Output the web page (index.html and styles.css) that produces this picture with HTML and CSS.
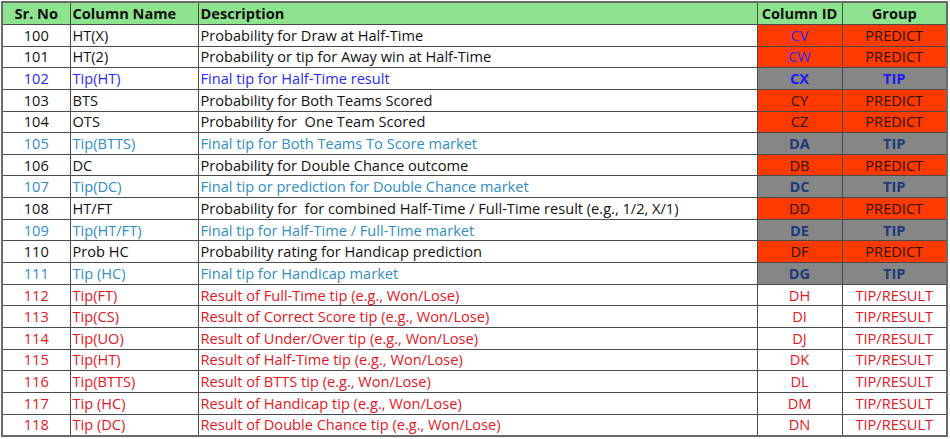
FILE: index.html
```html
<!DOCTYPE html>
<html>
<head>
<meta charset="utf-8">
<link rel="stylesheet" href="styles.css">
</head>
<body>
<table class="sheet">
<colgroup>
<col class="c-sr"><col class="c-name"><col class="c-desc"><col class="c-id"><col class="c-group">
</colgroup>
<thead>
<tr><th class="ctr">Sr. No</th><th>Column Name</th><th>Description</th><th class="ctr">Column ID</th><th class="ctr">Group</th></tr>
</thead>
<tbody>
<tr class="black"><td class="ctr">100</td><td>HT(X)</td><td>Probability for Draw at Half-Time</td><td class="ctr pred blue">CV</td><td class="ctr pred">PREDICT</td></tr>
<tr class="black"><td class="ctr">101</td><td>HT(2)</td><td>Probability or tip for Away win at Half-Time</td><td class="ctr pred blue">CW</td><td class="ctr pred">PREDICT</td></tr>
<tr class="blue"><td class="ctr">102</td><td>Tip(HT)</td><td>Final tip for Half-Time result</td><td class="ctr tip tip-blue">CX</td><td class="ctr tip tip-blue">TIP</td></tr>
<tr class="black"><td class="ctr">103</td><td>BTS</td><td>Probability for Both Teams Scored</td><td class="ctr pred">CY</td><td class="ctr pred">PREDICT</td></tr>
<tr class="black"><td class="ctr">104</td><td>OTS</td><td>Probability for&nbsp; One Team Scored</td><td class="ctr pred">CZ</td><td class="ctr pred">PREDICT</td></tr>
<tr class="teal"><td class="ctr">105</td><td>Tip(BTTS)</td><td>Final tip for Both Teams To Score market</td><td class="ctr tip">DA</td><td class="ctr tip">TIP</td></tr>
<tr class="black"><td class="ctr">106</td><td>DC</td><td>Probability for Double Chance outcome</td><td class="ctr pred">DB</td><td class="ctr pred">PREDICT</td></tr>
<tr class="teal"><td class="ctr">107</td><td>Tip(DC)</td><td>Final tip or prediction for Double Chance market</td><td class="ctr tip">DC</td><td class="ctr tip">TIP</td></tr>
<tr class="black"><td class="ctr">108</td><td>HT/FT</td><td>Probability for&nbsp; for combined Half-Time / Full-Time result (e.g., 1/2, X/1)</td><td class="ctr pred">DD</td><td class="ctr pred">PREDICT</td></tr>
<tr class="teal"><td class="ctr">109</td><td>Tip(HT/FT)</td><td>Final tip for Half-Time / Full-Time market</td><td class="ctr tip">DE</td><td class="ctr tip">TIP</td></tr>
<tr class="black"><td class="ctr">110</td><td>Prob HC</td><td>Probability rating for Handicap prediction</td><td class="ctr pred">DF</td><td class="ctr pred">PREDICT</td></tr>
<tr class="teal"><td class="ctr">111</td><td>Tip (HC)</td><td>Final tip for Handicap market</td><td class="ctr tip">DG</td><td class="ctr tip">TIP</td></tr>
<tr class="red"><td class="ctr">112</td><td>Tip(FT)</td><td>Result of Full-Time tip (e.g., Won/Lose)</td><td class="ctr">DH</td><td class="ctr">TIP/RESULT</td></tr>
<tr class="red"><td class="ctr">113</td><td>Tip(CS)</td><td>Result of Correct Score tip (e.g., Won/Lose)</td><td class="ctr">DI</td><td class="ctr">TIP/RESULT</td></tr>
<tr class="red"><td class="ctr">114</td><td>Tip(UO)</td><td>Result of Under/Over tip (e.g., Won/Lose)</td><td class="ctr">DJ</td><td class="ctr">TIP/RESULT</td></tr>
<tr class="red"><td class="ctr">115</td><td>Tip(HT)</td><td>Result of Half-Time tip (e.g., Won/Lose)</td><td class="ctr">DK</td><td class="ctr">TIP/RESULT</td></tr>
<tr class="red"><td class="ctr">116</td><td>Tip(BTTS)</td><td>Result of BTTS tip (e.g., Won/Lose)</td><td class="ctr">DL</td><td class="ctr">TIP/RESULT</td></tr>
<tr class="red"><td class="ctr">117</td><td>Tip (HC)</td><td>Result of Handicap tip (e.g., Won/Lose)</td><td class="ctr">DM</td><td class="ctr">TIP/RESULT</td></tr>
<tr class="red"><td class="ctr">118</td><td>Tip (DC)</td><td>Result of Double Chance tip (e.g., Won/Lose)</td><td class="ctr">DN</td><td class="ctr">TIP/RESULT</td></tr>
</tbody>
</table>
</body>
</html>
```

FILE: styles.css
```css
html, body {
  margin: 0;
  padding: 0;
  background: #ffffff;
}

body {
  padding: 1px 0 0 1px;
  font-family: "Open Sans", "Liberation Sans", Arial, sans-serif;
  font-size: 14.6px;
}

.sheet {
  border-collapse: collapse;
  table-layout: fixed;
  width: 945px;
  border: 2px solid #6a6a6a;
}

.c-sr { width: 68px; }
.c-name { width: 128px; }
.c-desc { width: 559px; }
.c-id { width: 85px; }
.c-group { width: 105px; }

.sheet th,
.sheet td {
  border: 1px solid #4a4a4a;
  padding: 0 2px;
  white-space: nowrap;
  overflow: hidden;
  text-align: left;
  line-height: 19px;
}

.sheet th {
  background: #8ee38f;
  color: #101010;
  font-weight: bold;
  height: 21px;
  font-size: 14.6px;
}

.sheet td {
  height: 20.65px;
}

.sheet .ctr {
  text-align: center;
}

.black td { color: #111111; }
.blue td { color: #2b2bf0; }
.teal td { color: #2f8ec4; }
.red td { color: #e2161d; }

.sheet td.pred {
  background: #ff3a00;
  color: #2a1200;
}

.sheet td.pred.blue {
  color: #2a2af0;
}

.sheet td.tip {
  background: #868686;
  color: #1c3a7a;
  font-weight: bold;
}

.sheet td.tip-blue {
  color: #1b1bf5;
}
```
